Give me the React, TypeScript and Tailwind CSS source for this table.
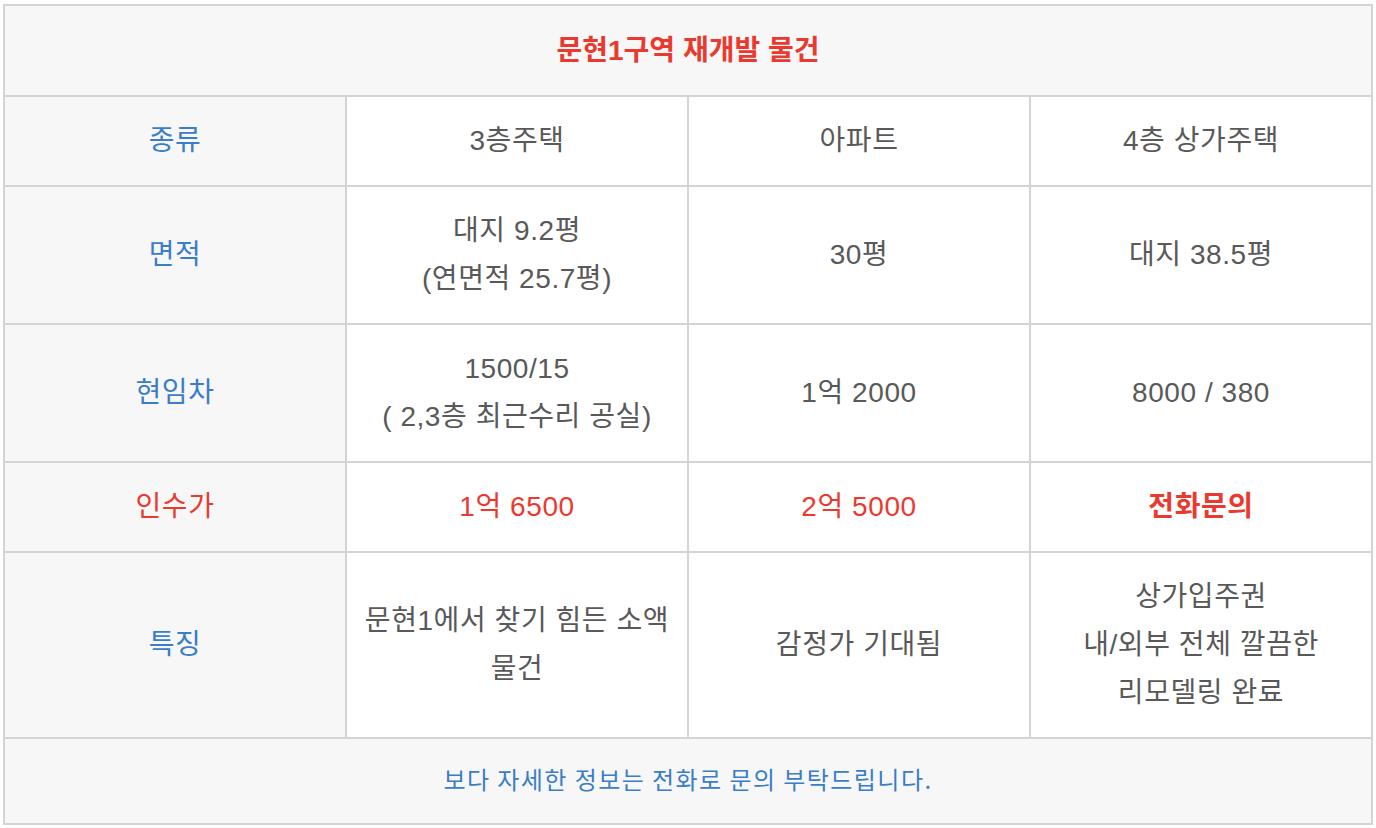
import React from "react";

type Cell = { lines: string[]; tone?: "gray" | "red" | "redBold" };
type Row = { label: string; labelRed?: boolean; cells: Cell[] };

const rows: Row[] = [
  { label: "종류", cells: [{ lines: ["3층주택"] }, { lines: ["아파트"] }, { lines: ["4층 상가주택"] }] },
  {
    label: "면적",
    cells: [{ lines: ["대지 9.2평", "(연면적 25.7평)"] }, { lines: ["30평"] }, { lines: ["대지 38.5평"] }],
  },
  {
    label: "현임차",
    cells: [
      { lines: ["1500/15", "( 2,3층 최근수리 공실)"] },
      { lines: ["1억 2000"] },
      { lines: ["8000 / 380"] },
    ],
  },
  {
    label: "인수가",
    labelRed: true,
    cells: [
      { lines: ["1억 6500"], tone: "red" },
      { lines: ["2억 5000"], tone: "red" },
      { lines: ["전화문의"], tone: "redBold" },
    ],
  },
  {
    label: "특징",
    cells: [
      { lines: ["문현1에서 찾기 힘든 소액", "물건"] },
      { lines: ["감정가 기대됨"] },
      { lines: ["상가입주권", "내/외부 전체 깔끔한", "리모델링 완료"] },
    ],
  },
];

const toneClass = {
  gray: "text-[#595959]",
  red: "text-[#ea3a2f]",
  redBold: "text-[#ea3a2f] font-bold",
};

const App: React.FC = () => {
  return (
    <div
      className="min-h-screen bg-white pl-[3px] pr-[3px] pt-[4px]"
      style={{ fontFamily: '"Liberation Sans", "Noto Sans CJK KR", sans-serif' }}
    >
      <table className="w-full table-fixed border-collapse border-2 border-[#d4d4d4] text-center">
        <colgroup>
          <col className="w-1/4" />
          <col className="w-1/4" />
          <col className="w-1/4" />
          <col className="w-1/4" />
        </colgroup>
        <thead>
          <tr>
            <th
              colSpan={4}
              className="h-[91px] border-2 border-[#d4d4d4] bg-[#f7f7f7] text-[28px] font-bold leading-[48px] text-[#ea3a2f]"
            >
              문현1구역 재개발 물건
            </th>
          </tr>
        </thead>
        <tbody>
          {rows.map((row) => (
            <tr key={row.label}>
              <td
                className={`border-2 border-[#d4d4d4] bg-[#f7f7f7] py-[20px] text-[28px] leading-[48px] tracking-[0.02em] ${
                  row.labelRed ? "text-[#ea3a2f]" : "text-[#3a7dc8]"
                }`}
              >
                {row.label}
              </td>
              {row.cells.map((cell, i) => (
                <td
                  key={i}
                  className={`border-2 border-[#d4d4d4] bg-white px-4 py-[20px] text-[28px] leading-[48px] tracking-[0.02em] ${
                    toneClass[cell.tone ?? "gray"]
                  }`}
                >
                  {cell.lines.map((line, j) => (
                    <div key={j} className="whitespace-nowrap">
                      {line}
                    </div>
                  ))}
                </td>
              ))}
            </tr>
          ))}
          <tr>
            <td
              colSpan={4}
              className="h-[86px] border-2 border-[#d4d4d4] bg-[#f7f7f7] pb-[4px] text-[24px] tracking-[0.06em] text-[#3a7dc8]"
              style={{ fontFamily: '"Noto Sans CJK KR", sans-serif' }}
            >
              보다 자세한 정보는 전화로 문의 부탁드립니다.
            </td>
          </tr>
        </tbody>
      </table>
    </div>
  );
};

export default App;
